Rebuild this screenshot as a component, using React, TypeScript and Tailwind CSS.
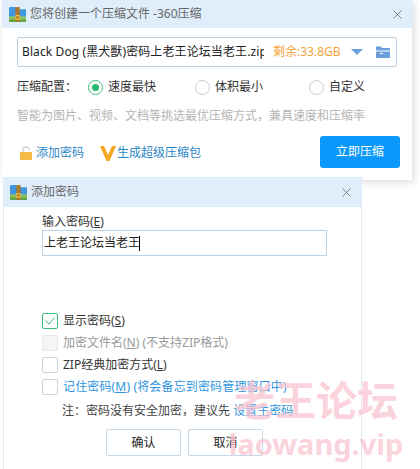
import { X } from "lucide-react";

const font = "font-['Noto_Sans','Noto_Sans_CJK_SC',sans-serif]";

function ZipIcon({ className }: { className: string }) {
  return (
    <svg className={className} viewBox="0 0 16 16">
      <path d="M0 2.5C0 1.7.6 1 1.4 1H6l1.5 2H16v7H0z" fill="#3f97de" />
      <rect x="0" y="10" width="16" height="2.5" fill="#8cc152" />
      <rect x="0" y="12.5" width="16" height="2.5" fill="#5ea33a" />
      <rect x="6" y="1" width="4" height="14" fill="#a9762c" />
      <rect x="6.5" y="9" width="3" height="3.5" fill="none" stroke="#f5c542" strokeWidth="1" />
    </svg>
  );
}

function Radio({ label, checked }: { label: string; checked?: boolean }) {
  return (
    <div className="flex items-center gap-[5px]">
      <span
        className={`flex size-[15px] items-center justify-center rounded-full border bg-white ${
          checked ? "border-[#3bbf7c]" : "border-[#c9ced3]"
        }`}
      >
        {checked && <span className="size-[7px] rounded-full bg-[#27b86f]" />}
      </span>
      <span className="text-[12px] text-[#333]">{label}</span>
    </div>
  );
}

function Check({ children, checked, disabled }: { children: React.ReactNode; checked?: boolean; disabled?: boolean }) {
  return (
    <div className="flex h-[22px] items-center gap-[5px]">
      <span
        className={`flex size-[16px] shrink-0 items-center justify-center rounded-[2px] border ${
          checked ? "border-[#3bbf7c]" : "border-[#d0d3d6]"
        } ${disabled ? "bg-[#f5f5f5] border-[#e8e8e8]" : "bg-white"}`}
      >
        {checked && (
          <svg className="size-[12px]" viewBox="0 0 12 12" fill="none" stroke="#3bbf7c" strokeWidth="1">
            <path d="M1.5 5.5 5 9l5.5-6.5" />
          </svg>
        )}
      </span>
      {children}
    </div>
  );
}

export default function App() {
  return (
    <div className={`relative h-[469px] w-[420px] overflow-hidden bg-white ${font}`}>
      <div className="ml-[2px] h-[180px] w-[410px] bg-white shadow-[2px_2px_8px_rgba(0,0,0,0.14)]">
        <div className="flex h-[28px] items-center bg-[#e0edfb] pl-[7px] pr-[7px]">
          <ZipIcon className="size-[17px]" />
          <span className="ml-[4px] text-[12px] text-[#666]">您将创建一个压缩文件 -360压缩</span>
          <X className="ml-auto size-[15px] text-[#5c6670]" strokeWidth={1.2} />
        </div>
        <div className="px-[15px] pt-[9px]">
          <div className="flex h-[30px] w-[380px] items-center rounded-[2px] border border-[#bcd0e2] pl-[4px] pr-[6px]">
            <span className="w-[242px] overflow-hidden whitespace-nowrap text-[12px] tracking-[0.1px] text-[#222]">
              Black Dog (黑犬獸)密码上老王论坛当老王.zip
            </span>
            <span className="ml-[9px] whitespace-nowrap text-[12px] text-[#f5a33b]">剩余:33.8GB</span>
            <svg className="ml-auto h-[6px] w-[12px]" viewBox="0 0 12 6">
              <path d="M0 0h12L6 6z" fill="#6d9fdc" />
            </svg>
            <svg className="ml-[13px] size-[14px]" viewBox="0 0 14 14">
              <path d="M0 1.5h5l1.2 1.5H14v2.5H0zM0 6.5h14V13H0zM4 8v1h3V8z" fill="#6d9fdc" fillRule="evenodd" />
            </svg>
          </div>
          <div className="mt-[10px] flex h-[20px] items-center">
            <span className="w-[71px] text-[12px] text-[#333]">压缩配置：</span>
            <div className="w-[107px]">
              <Radio label="速度最快" checked />
            </div>
            <div className="w-[114px]">
              <Radio label="体积最小" />
            </div>
            <Radio label="自定义" />
          </div>
          <p className="mt-[11px] whitespace-nowrap text-[12px] leading-[16px] text-[#b4b4b4]">
            智能为图片、视频、文档等挑选最优压缩方式，兼具速度和压缩率
          </p>
          <div className="mt-[12px] flex items-start">
            <div className="ml-[2px] mt-[8px] flex items-center text-[12px] text-[#2b86c5]">
              <svg className="size-[14px]" viewBox="0 0 14 14">
                <path d="M4 7V4a3 3 0 0 1 6 0" fill="none" stroke="#d9d4c8" strokeWidth="1.5" />
                <rect x="1" y="6" width="12" height="8" rx="1" fill="#f5bb45" />
              </svg>
              <span className="ml-[3px]">添加密码</span>
              <svg className="ml-[16px] h-[15px] w-[16px]" viewBox="0 0 16 15">
                <path d="M0 0h4l4 9 4-9h4L9.5 15h-3z" fill="#f5a623" />
              </svg>
              <span className="ml-[1px]">生成超级压缩包</span>
            </div>
            <button className="ml-auto mr-[-3px] h-[32px] w-[80px] rounded-[3px] bg-[#0a99fb] text-[12px] text-white">立即压缩</button>
          </div>
        </div>
      </div>

      <div className="relative -mt-[3px] ml-[3px] h-[295px] w-[359px] border-r border-[#e4e8f2] bg-white">
        <div className="flex h-[30px] items-center bg-[#e0edfb] pl-[7px] pr-[7px]">
          <ZipIcon className="size-[17px]" />
          <span className="ml-[4px] text-[12px] text-[#666]">添加密码</span>
          <X className="ml-auto size-[15px] text-[#5c6670]" strokeWidth={1.2} />
        </div>
        <div className="h-[265px] border-l border-[#e4e8f2] pl-[38px] pt-[6px]">
          <div className="text-[12px] leading-[17px] text-[#333]">
            输入密码(<span className="underline">E</span>)
          </div>
          <div className="flex h-[26px] w-[285px] items-center border border-[#bcd3e6] pl-[1px] text-[12px] text-[#222]">
            上老王论坛当老王
            <span className="ml-[-1px] h-[15px] w-[1px] bg-black" />
          </div>
          <div className="mt-[54px] flex flex-col">
            <Check checked>
              <span className="text-[12px] text-[#333]">
                显示密码(<span className="underline">S</span>)
              </span>
            </Check>
            <Check disabled>
              <span className="text-[12px] text-[#999]">
                加密文件名(<span className="underline">N</span>) (不支持ZIP格式)
              </span>
            </Check>
            <Check>
              <span className="text-[12px] text-[#333]">
                ZIP经典加密方式(<span className="underline">L</span>)
              </span>
            </Check>
            <Check>
              <span className="text-[12px] tracking-[0.15px] text-[#2f95e0]">
                记住密码(<span className="underline">M</span>) (将会备忘到密码管理窗口中)
              </span>
            </Check>
          </div>
          <div className="ml-[20px] mt-[4px] whitespace-nowrap text-[12px] leading-[17px] text-[#444]">
            注：密码没有安全加密，建议先 <span className="text-[#2f95e0]">设置主密码</span>
          </div>
          <div className="ml-[64px] mt-[10px] flex gap-[7px]">
            <button className="h-[27px] w-[75px] rounded-[2px] border border-[#c5d9e8] text-[12px] text-[#222]">确认</button>
            <button className="h-[27px] w-[75px] rounded-[2px] border border-[#c5d9e8] text-[12px] text-[#222]">取消</button>
          </div>
        </div>
      </div>

      <div className="pointer-events-none absolute left-[232px] top-[375px] flex w-[168px] flex-col items-center font-bold text-[#f9c5d1]/75">
        <span className="text-[41px] leading-[50px]">老王论坛</span>
        <span className="text-[29px] leading-[38px]">laowang.vip</span>
      </div>
    </div>
  );
}
